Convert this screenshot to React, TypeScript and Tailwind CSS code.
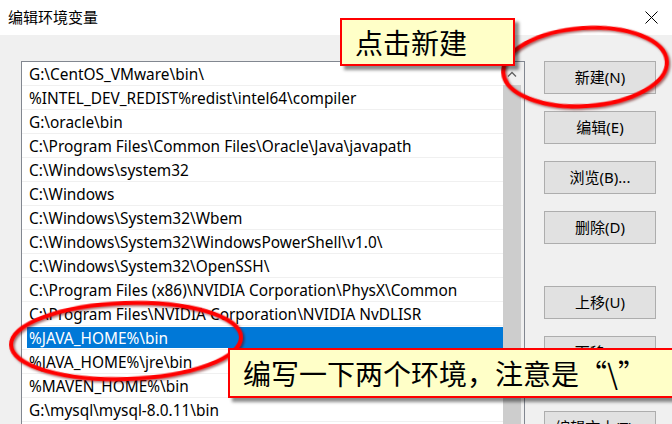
import React from "react";

const rows = [
  "G:\\CentOS_VMware\\bin\\",
  "%INTEL_DEV_REDIST%redist\\intel64\\compiler",
  "G:\\oracle\\bin",
  "C:\\Program Files\\Common Files\\Oracle\\Java\\javapath",
  "C:\\Windows\\system32",
  "C:\\Windows",
  "C:\\Windows\\System32\\Wbem",
  "C:\\Windows\\System32\\WindowsPowerShell\\v1.0\\",
  "C:\\Windows\\System32\\OpenSSH\\",
  "C:\\Program Files (x86)\\NVIDIA Corporation\\PhysX\\Common",
  "C:\\Program Files\\NVIDIA Corporation\\NVIDIA NvDLISR",
  "%JAVA_HOME%\\bin",
  "%JAVA_HOME%\\jre\\bin",
  "%MAVEN_HOME%\\bin",
  "G:\\mysql\\mysql-8.0.11\\bin",
];

const uiFont = { fontFamily: '"Noto Sans", "Noto Sans CJK SC", sans-serif' };
const calloutFont = { fontFamily: '"Noto Sans CJK SC", "Noto Sans", sans-serif' };

function Btn({ label, className = "" }: { label: string; className?: string }) {
  return (
    <div
      className={
        "w-[112px] h-[33px] border border-[#adadad] bg-[#e1e1e1] flex items-center justify-center text-[15px] text-black " +
        className
      }
    >
      {label}
    </div>
  );
}

export default function App() {
  return (
    <div className="relative w-[672px] h-[424px] overflow-hidden bg-[#f0f0f0]" style={uiFont}>
      {/* title bar */}
      <div className="h-[35px] bg-white flex items-center justify-between pl-[8px] pr-[14px]">
        <span className="text-[15px] text-black">编辑环境变量</span>
        <svg width="13" height="13" viewBox="0 0 13 13">
          <path d="M0.5 0.5 L12.5 12.5 M12.5 0.5 L0.5 12.5" stroke="#000" strokeWidth="1" />
        </svg>
      </div>

      {/* body */}
      <div className="flex pl-[21px] pt-[26px]">
        {/* list */}
        <div className="w-[504px] h-[420px] border border-[#828790] bg-white flex">
          <div className="flex-1 flex flex-col">
            {rows.map((r, i) => (
              <div key={i} className="h-[24px] shrink-0 border-b border-[#f0f0f0] flex items-stretch pl-[5px]">
                <div
                  className={
                    "flex-1 flex items-center pl-[2px] pt-[2px] text-[15.4px] whitespace-nowrap " +
                    (i === 11 ? "bg-[#0078d7] text-white my-[1px]" : "text-black")
                  }
                >
                  {r}
                </div>
              </div>
            ))}
          </div>
          {/* scrollbar */}
          <div className="w-[21px] bg-[#f0f0f0] flex flex-col">
            <div className="h-[23px] flex items-center justify-center pr-[3px]">
              <svg width="10" height="6" viewBox="0 0 10 6">
                <path d="M1 5.5 L5 1.5 L9 5.5" stroke="#606060" strokeWidth="1.3" fill="none" />
              </svg>
            </div>
            <div className="flex-1 bg-[#cdcdcd] mr-[3px]" />
          </div>
        </div>

        {/* buttons */}
        <div className="ml-[19px] flex flex-col">
          <Btn label="新建(N)" />
          <Btn label="编辑(E)" className="mt-[17px]" />
          <Btn label="浏览(B)..." className="mt-[17px]" />
          <Btn label="删除(D)" className="mt-[17px]" />
          <Btn label="上移(U)" className="mt-[42px]" />
          <Btn label="下移(O)" className="mt-[17px]" />
          <Btn label="编辑文本(T)..." className="mt-[42px]" />
        </div>
      </div>

      {/* red ellipses */}
      <svg className="absolute left-0 top-0 pointer-events-none" width="672" height="424">
        <defs>
          <filter id="sh" x="-20%" y="-20%" width="140%" height="140%">
            <feDropShadow dx="1.5" dy="1.5" stdDeviation="1" floodColor="#600000" floodOpacity="0.6" />
          </filter>
        </defs>
        <ellipse cx="585" cy="67" rx="82" ry="39" transform="rotate(-4 585 67)" fill="none" stroke="#ff0000" strokeWidth="4" filter="url(#sh)" />
        <ellipse cx="126" cy="341" rx="115" ry="38" transform="rotate(-2 126 341)" fill="none" stroke="#ff0000" strokeWidth="4" filter="url(#sh)" />
      </svg>

      {/* callout 1 */}
      <div
        className="absolute left-[340px] top-[18px] w-[175px] h-[48px] bg-[#ffffc8] border-2 border-[#ff0000] shadow-[4px_4px_3px_rgba(0,0,0,0.45)] flex items-center pl-[13px]"
        style={calloutFont}
      >
        <span className="text-[28px] leading-none text-black">点击新建</span>
      </div>

      {/* callout 2 */}
      <div
        className="absolute left-[228px] top-[348px] w-[460px] h-[50px] bg-[#ffffc8] border-2 border-[#ff0000] shadow-[4px_4px_3px_rgba(0,0,0,0.45)] flex items-center pl-[13px]"
        style={calloutFont}
      >
        <span className="text-[28px] leading-none text-black whitespace-nowrap">编写一下两个环境，注意是“\”</span>
      </div>
    </div>
  );
}
